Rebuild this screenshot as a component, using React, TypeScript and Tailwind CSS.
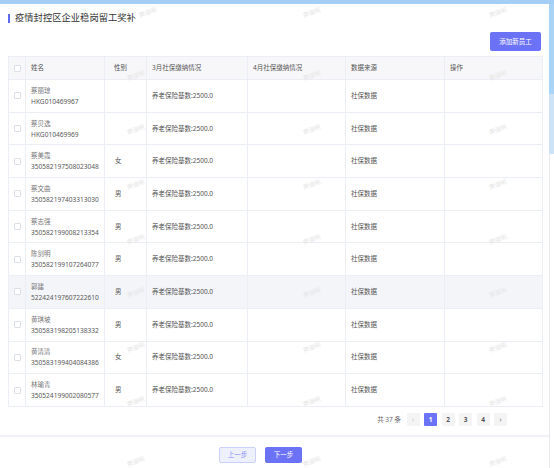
const rows = [
  { name: '蔡丽琼', id: 'HKG010469967', sex: '' },
  { name: '蔡贝选', id: 'HKG010469969', sex: '' },
  { name: '蔡美霞', id: '350582197508023048', sex: '女' },
  { name: '蔡文曲', id: '350582197403313030', sex: '男' },
  { name: '蔡志强', id: '350582199008213354', sex: '男' },
  { name: '陈剑明', id: '350582199107264077', sex: '男' },
  { name: '郭建', id: '522424197607222610', sex: '男', active: true },
  { name: '黄琪坡', id: '350583198205138332', sex: '男' },
  { name: '黄清清', id: '350583199404084386', sex: '女' },
  { name: '林瑜青', id: '350524199002080577', sex: '男' },
]

const marks: { x: number; y: number }[] = []
for (const y of [13, 76, 130, 185, 240, 293, 348, 402, 462]) {
  for (const x of [136, 312, 498]) marks.push({ x: y === 13 && x === 136 ? 148 : x, y })
}

function Checkbox() {
  return <span className="block h-[7px] w-[7px] rounded-[1px] border border-[#dcdfe6] bg-white" />
}

const cell = 'flex items-center border-r border-[#eceef5]'
const pageBtn = 'flex h-[13px] w-[13px] items-center justify-center rounded-[1px]'

export default function App() {
  return (
    <div
      className="relative flex h-[468px] w-[554px] flex-col overflow-hidden bg-[#f0f2f5] text-[#555]"
      style={{ fontFamily: '"Noto Sans", "Noto Sans CJK SC", sans-serif' }}
    >
      <div className="h-[4px] shrink-0 bg-[#a3cff6]" />
      <div className="flex flex-1">
        <div className="flex w-[549px] flex-col">
          {/* Card */}
          <div className="flex h-[431px] flex-col bg-white px-[8px]">
            <div className="flex h-[20px] items-end gap-[5px]">
              <span className="mb-[1px] h-[9px] w-[2px] bg-[#5a6cf1]" />
              <span className="text-[9.3px] leading-[12px] text-[#333]">疫情封控区企业稳岗留工奖补</span>
            </div>

            <div className="mt-[8px] flex justify-end">
              <button className="h-[19px] w-[51px] rounded-[2px] bg-[#6c72f5] text-[6.5px] text-white">添加新员工</button>
            </div>

            {/* Table */}
            <div className="mt-[5px] w-[535px] border-l border-t border-[#eceef5] text-[6.5px]">
              <div className="flex h-[23px] border-b border-[#eceef5] bg-[#f7f7f9] text-[#555]">
                <div className={`${cell} w-[17px] justify-center`}><Checkbox /></div>
                <div className={`${cell} w-[79px] pl-[5px]`}>姓名</div>
                <div className={`${cell} w-[42px] pl-[9px]`}>性别</div>
                <div className={`${cell} w-[101px] pl-[5px]`}>3月社保缴纳情况</div>
                <div className={`${cell} w-[98px] pl-[5px]`}>4月社保缴纳情况</div>
                <div className={`${cell} w-[99px] pl-[5px]`}>数据来源</div>
                <div className={`${cell} w-[98px] pl-[5px]`}>操作</div>
              </div>
              {rows.map((r, i) => (
                <div
                  key={i}
                  className={`flex h-[32.7px] border-b border-[#eceef5] ${r.active ? 'bg-[#f4f5f9]' : 'bg-white'}`}
                >
                  <div className={`${cell} w-[17px] justify-center`}><Checkbox /></div>
                  <div className={`${cell} w-[79px] flex-col !items-start justify-center pl-[5px]`}>
                    <span className="leading-[11px] text-[#777]">{r.name}</span>
                    <span className="text-[6.6px] leading-[11px] text-[#5a5a5a]">{r.id}</span>
                  </div>
                  <div className={`${cell} w-[42px] pl-[10px]`}>{r.sex}</div>
                  <div className={`${cell} w-[101px] pl-[5px]`}>养老保险基数:2500.0</div>
                  <div className={`${cell} w-[98px]`} />
                  <div className={`${cell} w-[99px] pl-[5px]`}>社保数据</div>
                  <div className={`${cell} w-[98px]`} />
                </div>
              ))}
            </div>

            {/* Pagination */}
            <div className="mt-[6px] flex items-center justify-end gap-[4.5px] pr-[34px] text-[6.5px]">
              <span className="mr-[1px] text-[#666]">共 37 条</span>
              <span className={`${pageBtn} bg-[#f4f4f5] text-[#bbb]`}>‹</span>
              <span className={`${pageBtn} bg-[#6c72f5] font-bold text-white`}>1</span>
              <span className={`${pageBtn} bg-[#f4f4f5] font-bold text-[#555]`}>2</span>
              <span className={`${pageBtn} bg-[#f4f4f5] font-bold text-[#555]`}>3</span>
              <span className={`${pageBtn} bg-[#f4f4f5] font-bold text-[#555]`}>4</span>
              <span className={`${pageBtn} bg-[#f4f4f5] text-[#555]`}>›</span>
            </div>
          </div>

          {/* Footer */}
          <div className="mt-[2px] flex flex-1 gap-[9px] bg-white pl-[219px] pt-[10px]">
            <button className="h-[16px] w-[37px] rounded-[2px] border border-[#cdd0fa] bg-[#eef0fe] text-[6.5px] text-[#8a8ff2]">上一步</button>
            <button className="h-[16px] w-[37px] rounded-[2px] bg-[#6c72f5] text-[6.5px] text-white">下一步</button>
          </div>
        </div>

        {/* Right edge of the page background */}
        <div className="flex flex-1 flex-col">
          <div className="h-[90px] bg-[#a9d3f7]" />
          <div className="h-[60px] bg-[#cfe3f6]" />
          <div className="flex-1 border-l border-[#e6e8eb] bg-white" />
        </div>
      </div>

      {/* Watermarks */}
      {marks.map((m, i) => (
        <span
          key={i}
          className="pointer-events-none absolute -translate-x-1/2 -translate-y-1/2 -rotate-[20deg] text-[6px] text-[#e6e6e6]"
          style={{ left: m.x, top: m.y }}
        >
          黄强明
        </span>
      ))}
    </div>
  )
}
